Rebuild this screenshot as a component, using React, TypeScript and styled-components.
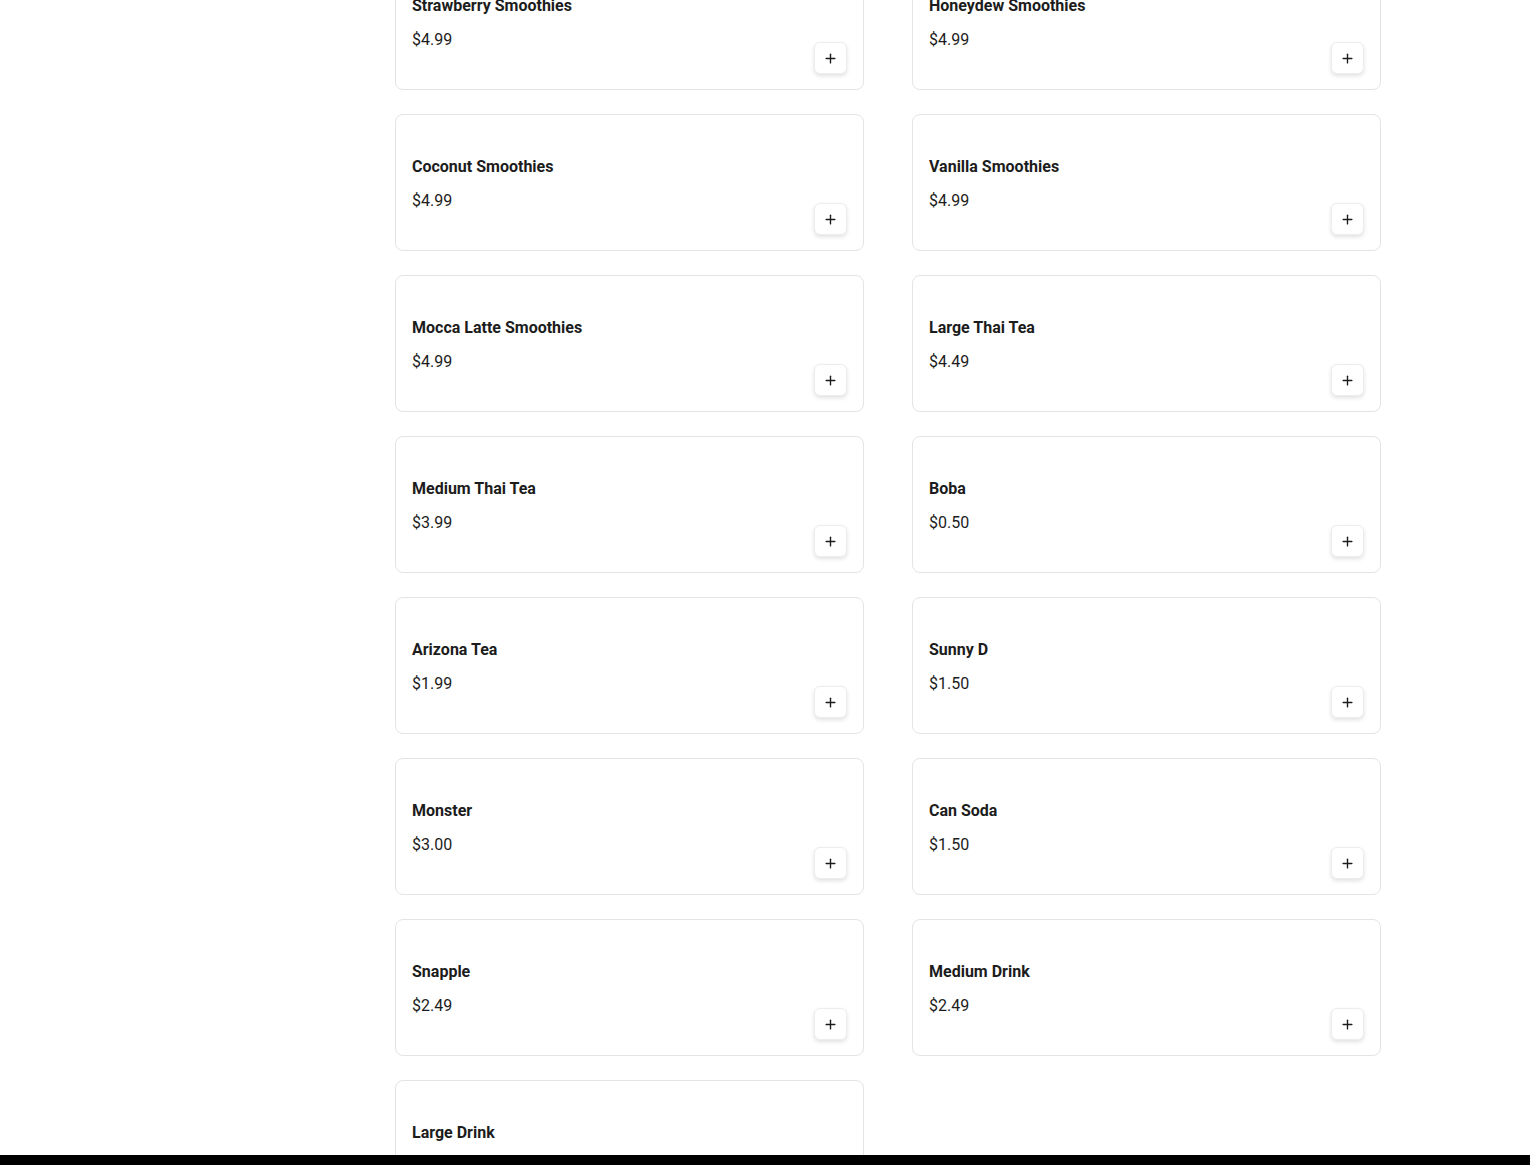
import React from 'react';
import styled, { createGlobalStyle } from 'styled-components';
import { Plus } from 'lucide-react';

const GlobalStyle = createGlobalStyle`
  body {
    margin: 0;
    background: #ffffff;
    font-family: Roboto, "Liberation Sans", Arial, sans-serif;
    color: #1c1c1c;
  }
`;

const Layout = styled.div`
  display: grid;
  grid-template-columns: 395px 986px 1fr;
  margin-top: -47px;
  padding-bottom: 40px;
`;

const MenuGrid = styled.div`
  grid-column: 2;
  display: grid;
  grid-template-columns: repeat(2, 469px);
  column-gap: 48px;
  row-gap: 24px;
`;

const Card = styled.div`
  box-sizing: border-box;
  height: 137px;
  padding: 16px 16px 15px 16px;
  display: flex;
  align-items: center;
  justify-content: space-between;
  background: #fff;
  border: 1px solid #e4e4e4;
  border-radius: 8px;
`;

const Info = styled.div`
  display: flex;
  flex-direction: column;
  gap: 10px;
  padding-top: 1px;
`;

const Name = styled.div`
  font-size: 16px;
  font-weight: 700;
  line-height: 24px;
  color: #1c1c1c;
`;

const Price = styled.div`
  font-size: 16px;
  font-weight: 400;
  line-height: 24px;
  color: #1c1c1c;
`;

const AddButton = styled.button`
  align-self: flex-end;
  width: 33px;
  height: 32px;
  padding: 0;
  display: flex;
  align-items: center;
  justify-content: center;
  background: #fff;
  border: 1px solid #ededed;
  border-radius: 6px;
  box-shadow: 0 2px 4px rgba(0, 0, 0, 0.12);
  color: #1c1c1c;
  cursor: pointer;
`;

const BottomBar = styled.div`
  position: fixed;
  left: 0;
  right: 0;
  bottom: 0;
  height: 10px;
  background: #000;
`;

const items: Array<[string, string]> = [
  ['Strawberry Smoothies', '$4.99'],
  ['Honeydew Smoothies', '$4.99'],
  ['Coconut Smoothies', '$4.99'],
  ['Vanilla Smoothies', '$4.99'],
  ['Mocca Latte Smoothies', '$4.99'],
  ['Large Thai Tea', '$4.49'],
  ['Medium Thai Tea', '$3.99'],
  ['Boba', '$0.50'],
  ['Arizona Tea', '$1.99'],
  ['Sunny D', '$1.50'],
  ['Monster', '$3.00'],
  ['Can Soda', '$1.50'],
  ['Snapple', '$2.49'],
  ['Medium Drink', '$2.49'],
  ['Large Drink', '$3.49'],
];

export default function App() {
  return (
    <>
      <GlobalStyle />
      <Layout>
        <MenuGrid>
          {items.map(([name, price]) => (
            <Card key={name}>
              <Info>
                <Name>{name}</Name>
                <Price>{price}</Price>
              </Info>
              <AddButton aria-label={`Add ${name}`}>
                <Plus size={15} strokeWidth={2.2} />
              </AddButton>
            </Card>
          ))}
        </MenuGrid>
      </Layout>
      <BottomBar />
    </>
  );
}
